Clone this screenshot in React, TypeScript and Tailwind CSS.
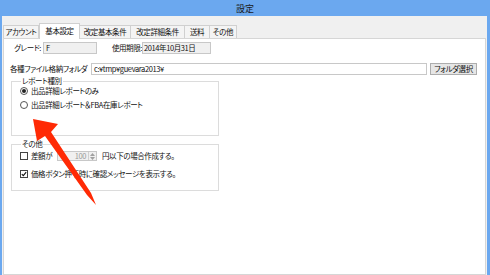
import React from 'react';

const TABS = [
  { label: 'アカウント', w: 'w-[36px]' },
  { label: '基本設定', w: 'w-[41px]', active: true },
  { label: '改定基本条件', w: 'w-[51px]' },
  { label: '改定詳細条件', w: 'w-[54px]' },
  { label: '送料', w: 'w-[25px]' },
  { label: 'その他', w: 'w-[27px]' },
];

function Radio({ checked, label }: { checked?: boolean; label: string }) {
  return (
    <div className="flex h-[10px] items-center gap-[3px]">
      <span className="flex h-[8px] w-[8px] items-center justify-center rounded-full border border-[#555] bg-white">
        {checked && <span className="h-[4px] w-[4px] rounded-full bg-[#222]" />}
      </span>
      <span>{label}</span>
    </div>
  );
}

function Check({ checked }: { checked?: boolean }) {
  return (
    <span className="flex h-[8px] w-[8px] shrink-0 items-center justify-center border border-[#444] bg-white">
      {checked && (
        <svg width="6" height="6" viewBox="0 0 6 6">
          <path d="M0.8 3.1 L2.3 4.6 L5.2 1.2" fill="none" stroke="#111" strokeWidth="1.1" />
        </svg>
      )}
    </span>
  );
}

export default function App() {
  return (
    <div className="relative flex h-[275px] w-[490px] flex-col overflow-hidden bg-[#6ba8ef] font-['Noto_Sans_CJK_JP','Liberation_Sans',sans-serif] text-[7.5px] leading-none tracking-[-0.4px] text-[#111] [font-feature-settings:'palt']">
      {/* title bar */}
      <div className="flex h-[16px] shrink-0 items-center justify-center text-[9px] tracking-normal text-[#1a1a1a]">設定</div>

      <div className="ml-[2px] mr-[3px] flex flex-1 flex-col bg-[#f0f0f0] px-[1px]">
        {/* tabs */}
        <div className="flex h-[22px] shrink-0 items-end">
          {TABS.map((t) =>
            t.active ? (
              <div
                key={t.label}
                className={`${t.w} relative z-10 -mb-[1px] flex h-[16px] items-center justify-center border border-b-0 border-[#d0d0d0] bg-white pb-[1px]`}
              >
                {t.label}
              </div>
            ) : (
              <div
                key={t.label}
                className={`${t.w} flex h-[13px] items-center justify-center border-t border-r border-[#d0d0d0] first:border-l bg-[#f4f4f4]`}
              >
                {t.label}
              </div>
            ),
          )}
        </div>

        {/* panel */}
        <div className="flex flex-1 flex-col border border-[#d6d6d6] bg-white">
          {/* grade / expiry */}
          <div className="mt-[3px] flex h-[12px] items-center">
            <span className="w-[38px] pr-[1px] text-right">グレード:</span>
            <div className="ml-[1px] flex h-[12px] w-[54px] items-center border border-[#c8c8c8] bg-[#f0f0f0] pl-[2px]">F</div>
            <span className="ml-[12px] w-[33px] text-right">使用期限:</span>
            <div className="flex h-[12px] w-[69px] items-center border border-[#c8c8c8] bg-[#f0f0f0] pl-[1px]">2014年10月31日</div>
          </div>

          {/* folder */}
          <div className="mt-[8px] flex h-[13px] items-center">
            <span className="ml-[6px] w-[81px] whitespace-nowrap">各種ファイル格納フォルダ</span>
            <div className="flex h-[12px] w-[336px] items-center border border-[#c8c8c8] bg-white pl-[2px]">c:¥tmp¥guevara2013¥</div>
            <button
              type="button"
              className="ml-[3px] flex h-[12px] w-[47px] items-center justify-center border border-[#adadad] bg-[#e6e6e6]"
            >
              フォルダ選択
            </button>
          </div>

          {/* report type */}
          <fieldset className="ml-[7px] mt-[2px] h-[59px] w-[208px] border border-[#dcdcdc] pl-[8px]">
            <legend className="ml-[1px] px-[1px] leading-[8px]">レポート種別</legend>
            <div className="mt-[1px] flex flex-col gap-[4px]">
              <Radio checked label="出品詳細レポートのみ" />
              <Radio label="出品詳細レポート＆FBA在庫レポート" />
            </div>
          </fieldset>

          {/* other */}
          <fieldset className="ml-[7px] mt-[4px] h-[51px] w-[208px] border border-[#dcdcdc] pl-[8px]">
            <legend className="ml-[1px] px-[1px] leading-[8px]">その他</legend>
            <div className="mt-[3px] flex h-[10px] items-center">
              <Check />
              <span className="ml-[3px] w-[26px]">差額が</span>
              <div className="flex h-[10px] w-[40px] items-center border border-[#c8c8c8] bg-[#f0f0f0]">
                <span className="flex-1 pr-[2px] text-right text-[#9a9a9a]">100</span>
                <span className="flex h-full w-[8px] flex-col items-center justify-center gap-[1px] border-l border-[#d0d0d0] text-[#999]">
                  <svg width="5" height="3" viewBox="0 0 5 3"><path d="M0 3 L2.5 0 L5 3Z" fill="#a0a0a0" /></svg>
                  <svg width="5" height="3" viewBox="0 0 5 3"><path d="M0 0 L2.5 3 L5 0Z" fill="#a0a0a0" /></svg>
                </span>
              </div>
              <span className="ml-[5px]">円以下の場合作成する。</span>
            </div>
            <div className="mt-[8px] flex h-[10px] items-center">
              <Check checked />
              <span className="ml-[3px]">価格ボタン押下時に確認メッセージを表示する。</span>
            </div>
          </fieldset>
        </div>
      </div>

      {/* red annotation arrow */}
      <svg className="pointer-events-none absolute left-0 top-0" width="490" height="275" viewBox="0 0 490 275">
        <polygon points="33,119 58,124 51,132 91,193 96,205 87,195 45,136 37,141" fill="#ff2a05" />
      </svg>
    </div>
  );
}
